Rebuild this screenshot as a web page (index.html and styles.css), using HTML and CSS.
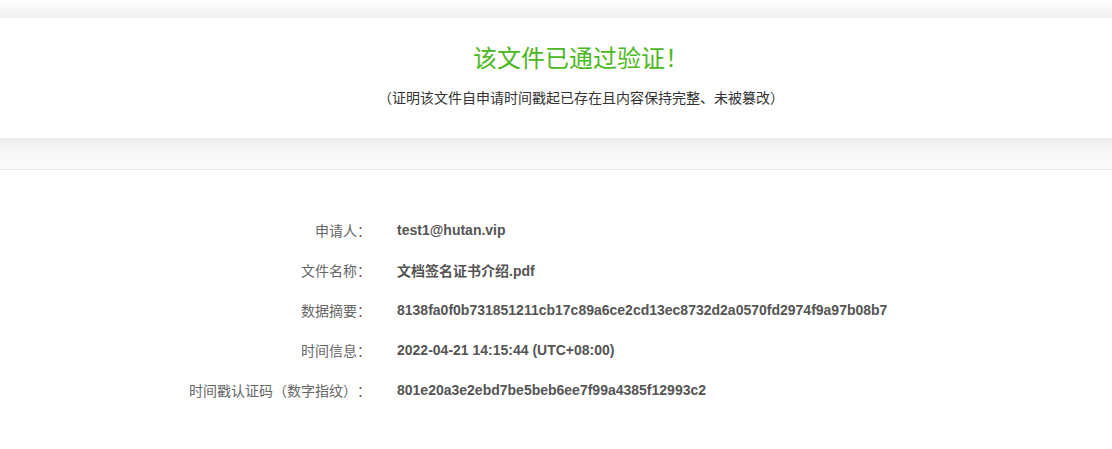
FILE: index.html
```html
<!DOCTYPE html>
<html lang="zh">
<head>
<meta charset="utf-8">
<link rel="stylesheet" href="styles.css">
</head>
<body>
<div class="top-strip"></div>
<section class="result">
  <h1 class="title">该文件已通过验证！</h1>
  <p class="subtitle">（证明该文件自申请时间戳起已存在且内容保持完整、未被篡改）</p>
</section>
<div class="divider"></div>
<section class="details">
  <div class="row"><div class="label">申请人：</div><div class="value">test1@hutan.vip</div></div>
  <div class="row"><div class="label">文件名称：</div><div class="value">文档签名证书介绍.pdf</div></div>
  <div class="row"><div class="label">数据摘要：</div><div class="value">8138fa0f0b731851211cb17c89a6ce2cd13ec8732d2a0570fd2974f9a97b08b7</div></div>
  <div class="row"><div class="label">时间信息：</div><div class="value">2022-04-21 14:15:44 (UTC+08:00)</div></div>
  <div class="row"><div class="label">时间戳认证码（数字指纹）：</div><div class="value">801e20a3e2ebd7be5beb6ee7f99a4385f12993c2</div></div>
</section>
</body>
</html>
```
FILE: styles.css
```css
html, body {
  margin: 0;
  padding: 0;
  background: #fff;
  font-family: "Liberation Sans", Arial, "Noto Sans CJK SC", sans-serif;
  text-spacing-trim: space-all;
}
.top-strip {
  height: 17px;
  background: linear-gradient(#ffffff, #f1f1f1);
  border-bottom: 1px solid #ececec;
}
.result {
  background: #fff;
  height: 120px;
  box-sizing: border-box;
  padding: 22px 0 0 50px;
  text-align: center;
}
.title {
  margin: 0;
  font-family: "Noto Sans CJK SC", sans-serif;
  font-weight: 400;
  font-size: 24px;
  line-height: 34px;
  color: #4cb81f;
}
.subtitle {
  margin: 13px 0 0;
  font-family: "Noto Sans CJK SC", sans-serif;
  font-size: 14px;
  line-height: 20px;
  color: #333;
}
.divider {
  height: 31px;
  background: linear-gradient(#ececec, #f6f6f6 40%, #fbfbfb);
  border-bottom: 1px solid #e6e6ee;
}
.details {
  padding-top: 50px;
  display: flex;
  flex-direction: column;
  gap: 20px;
}
.row {
  display: flex;
  align-items: center;
  height: 20px;
}
.label {
  width: 371px;
  text-align: right;
  font-family: "Noto Sans CJK SC", sans-serif;
  font-size: 14px;
  color: #666;
}
.value {
  margin-left: 26px;
  font-size: 14px;
  font-weight: 700;
  color: #555;
}
```
